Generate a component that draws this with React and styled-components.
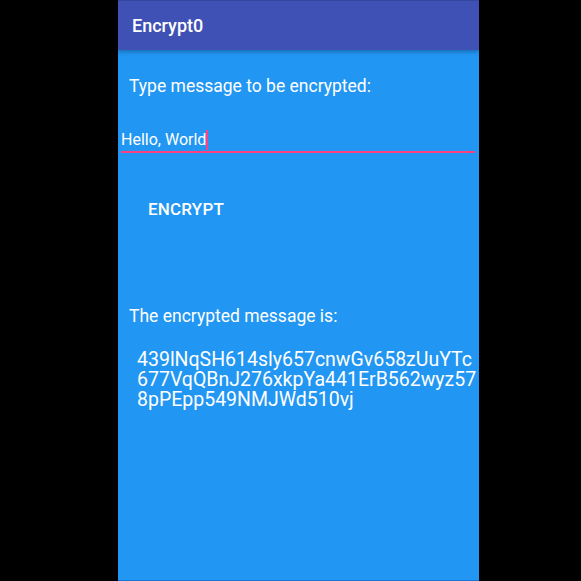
import React from 'react'
import styled, { createGlobalStyle } from 'styled-components'

const Global = createGlobalStyle`
  html, body {
    margin: 0;
    padding: 0;
    background: #000;
  }
  body {
    font-family: Roboto, "Noto Sans", sans-serif;
  }
`

const Screen = styled.div`
  width: 581px;
  height: 581px;
  display: flex;
  justify-content: flex-start;
  padding-left: 118px;
  box-sizing: border-box;
`

const Phone = styled.div`
  width: 361px;
  height: 581px;
  background: #2196f3;
  display: flex;
  flex-direction: column;
  border-bottom: 1px solid #1976d2;
  box-sizing: border-box;
`

const Toolbar = styled.header`
  height: 50px;
  background: #3f51b5;
  border-top: 1px solid #3545a0;
  box-sizing: border-box;
  box-shadow: 0 2px 4px rgba(0, 0, 0, 0.25);
  display: flex;
  align-items: center;
  padding: 0 0 0 14px;
  color: #fff;
  font-size: 18px;
  font-weight: 500;
  position: relative;
  z-index: 1;
`

const Content = styled.main`
  display: flex;
  flex-direction: column;
  color: #fff;
`

const Label = styled.div`
  font-size: 17.5px;
  padding-left: ${p => p.$indent}px;
  margin-top: ${p => p.$top}px;
  line-height: 20px;
`

const Field = styled.div`
  margin: 34px 4px 0 3px;
  border-bottom: 2px solid #ff4081;
  padding-bottom: 1px;
  font-size: 16px;
  line-height: 20px;
  display: flex;
  align-items: center;
`

const Caret = styled.span`
  display: inline-block;
  width: 2px;
  height: 20px;
  background: #ff4081;
`

const Button = styled.div`
  margin: 46px 0 0 30px;
  font-size: 17px;
  font-weight: 500;
  letter-spacing: 0.2px;
  line-height: 20px;
`

const Output = styled.div`
  margin: 24px 0 0 19px;
  width: 340px;
  font-size: 19.5px;
  line-height: 20px;
  word-break: break-all;
`

export default function App() {
  return (
    <>
      <Global />
      <Screen>
        <Phone>
          <Toolbar>Encrypt0</Toolbar>
          <Content>
            <Label $indent={11} $top={26}>Type message to be encrypted:</Label>
            <Field>
              Hello, World<Caret />
            </Field>
            <Button>ENCRYPT</Button>
            <Label $indent={11} $top={87}>The encrypted message is:</Label>
            <Output>439lNqSH614sly657cnwGv658zUuYTc677VqQBnJ276xkpYa441ErB562wyz578pPEpp549NMJWd510vj</Output>
          </Content>
        </Phone>
      </Screen>
    </>
  )
}
